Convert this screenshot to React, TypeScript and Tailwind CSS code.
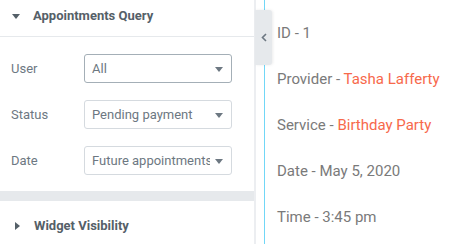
import React from 'react';

function Caret({ dir }: { dir: 'down' | 'right' }) {
  // petit triangle des titres de section
  return dir === 'down' ? (
    <svg width="8" height="5" viewBox="0 0 8 5" className="shrink-0">
      <path d="M0 0h8L4 5z" fill="#556068" />
    </svg>
  ) : (
    <svg width="5" height="8" viewBox="0 0 5 8" className="shrink-0">
      <path d="M0 0l5 4-5 4z" fill="#556068" />
    </svg>
  );
}

function Select({ value, focused }: { value: string; focused?: boolean }) {
  return (
    <div
      className={`relative w-[148px] h-[29px] rounded-[3px] border bg-white flex items-center pl-[7px] pr-[21px] overflow-hidden ${
        focused ? 'border-[#a4afb7]' : 'border-[#d5dadf]'
      }`}
    >
      <span className="whitespace-nowrap overflow-hidden text-[13px] text-[#6d7882]">{value}</span>
      <svg width="8" height="5" viewBox="0 0 8 5" className="absolute right-[8px] top-[12px]">
        <path d="M0 0h8L4 5z" fill="#6d7882" />
      </svg>
    </div>
  );
}

function Row({ label, value, focused }: { label: string; value: string; focused?: boolean }) {
  return (
    <div className="flex items-center px-[11px]">
      <span className="w-[73px] text-[13px] text-[#6d7882]">{label}</span>
      <Select value={value} focused={focused} />
    </div>
  );
}

export default function App() {
  const lines = [
    { k: 'ID - 1' },
    { k: 'Provider - ', v: 'Tasha Lafferty' },
    { k: 'Service - ', v: 'Birthday Party' },
    { k: 'Date - May 5, 2020' },
    { k: 'Time - 3:45 pm' },
  ];

  return (
    <div className="w-[457px] h-[244px] flex overflow-hidden bg-white font-['Roboto',sans-serif]">
      {/* Panneau de réglages */}
      <div className="w-[256px] shrink-0 flex flex-col border-r-[2px] border-[#eceef1]">
        <div className="h-[37px] shrink-0 flex items-start pt-[7px] pl-[12px] gap-[13px] border-b border-[#e6e9ec]">
          <div className="h-[18px] flex items-center">
            <Caret dir="down" />
          </div>
          <span className="text-[13px] leading-[18px] font-bold text-[#556068]">Appointments Query</span>
        </div>
        <div className="flex flex-col gap-[17px] pt-[17px] pb-[16px]">
          <Row label="User" value="All" focused />
          <Row label="Status" value="Pending payment" />
          <Row label="Date" value="Future appointments" />
        </div>
        <div className="h-[10px] shrink-0 bg-[#e6e9ec]" />
        <div className="flex items-center pt-[16px] pl-[15px] gap-[14px]">
          <div className="h-[18px] flex items-center">
            <Caret dir="right" />
          </div>
          <span className="text-[13px] leading-[18px] font-bold text-[#556068]">Widget Visibility</span>
        </div>
      </div>

      {/* Aperçu */}
      <div className="relative flex-1 flex">
        <div className="ml-[8px] border-l border-[#71d7f7] flex-1 flex flex-col pt-[10px] pl-[12px]">
          {lines.map((l) => (
            <div key={l.k} className="leading-[46px] text-[15px] text-[#7a7a7a] whitespace-nowrap">
              {l.k}
              {l.v && <span className="text-[#f7694b]">{l.v}</span>}
            </div>
          ))}
        </div>
        <button className="absolute left-[-1px] top-[10px] w-[17px] h-[55px] bg-[#e6e9ec] rounded-r-[3px] shadow-[1px_0_3px_rgba(0,0,0,0.08)] flex items-center justify-center">
          <svg width="6" height="9" viewBox="0 0 6 9">
            <path d="M5 1L1.5 4.5 5 8" fill="none" stroke="#6d7882" strokeWidth="1.6" />
          </svg>
        </button>
      </div>
    </div>
  );
}
